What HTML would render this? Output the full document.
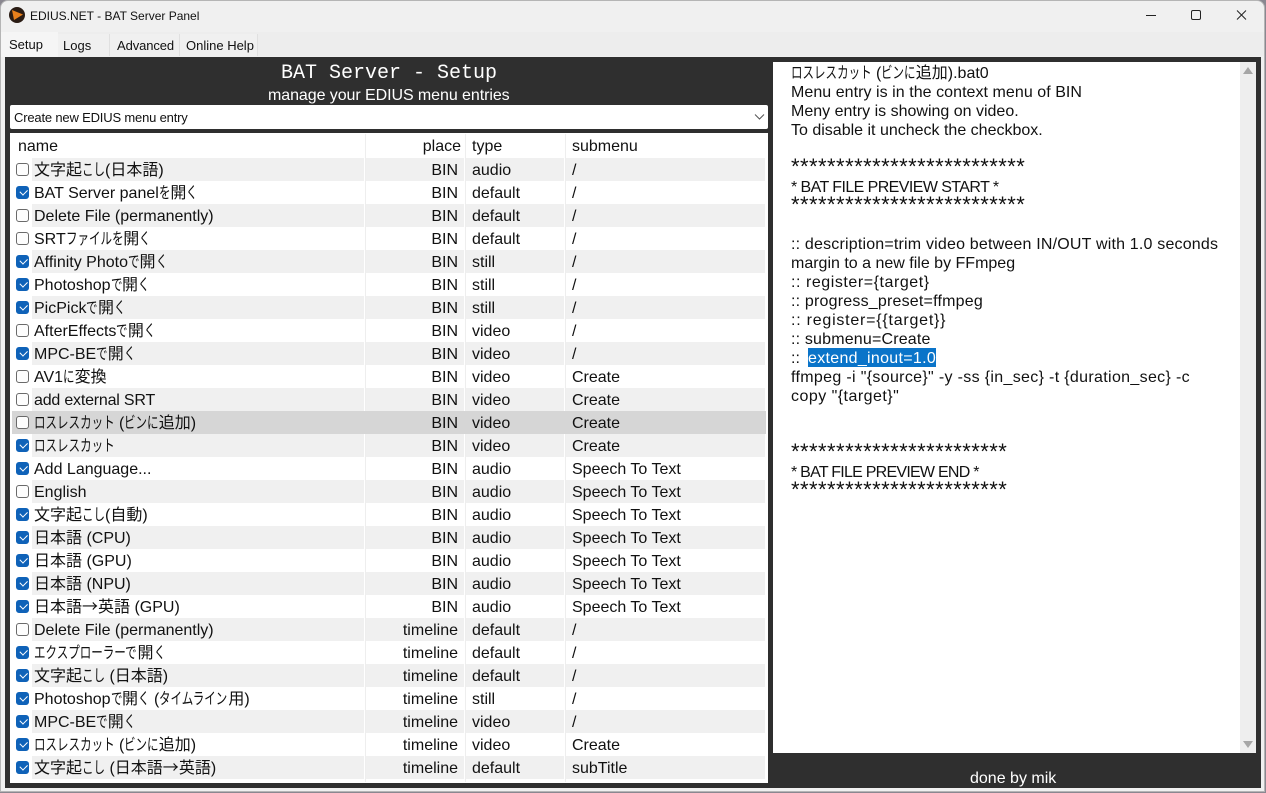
<!DOCTYPE html>
<html><head><meta charset="utf-8"><style>
*{box-sizing:border-box}
html,body{margin:0;padding:0;width:1266px;height:793px;overflow:hidden;background:#8a8790}
body{font-family:"Liberation Sans","Noto Sans CJK JP",sans-serif;font-size:16px;color:#111;position:relative}
div,span{position:absolute;white-space:pre}
#win{left:0;top:0;width:1265px;height:792px;background:#f0f0f0;border:1px solid #b5b5b5;border-radius:8px 8px 0 0;overflow:hidden}
.t{line-height:20px;height:20px}
.band{background:#f0f0f0;height:23px}
.cb{left:16px;width:13px;height:13px;border-radius:3px;border:1px solid #6a6a6a;background:#fdfdfd}
.cb.on{background:#0f62b8;border-color:#0f62b8}
.cb.on::after{content:"";position:absolute;left:3px;top:2px;width:6px;height:3.500px;border-left:1.200px solid #fff;border-bottom:1.200px solid #fff;transform:rotate(-45deg)}
.r{text-align:right}
.rt{left:791px;line-height:19px;height:19px;font-size:16px}
k{display:inline-block;width:calc(var(--n)*11.500px);transform:scaleX(.72);transform-origin:0 50%}
.n1{--n:1}.n2{--n:2}.n3{--n:3}.n5{--n:5}.n6{--n:6}.n7{--n:7}.n9{--n:9}
em{font-style:normal;font-family:"Noto Sans CJK JP",sans-serif;line-height:0}
.s{font-size:22px;letter-spacing:.45px}
</style></head><body>
<div id="win"></div>
<!-- title bar -->
<svg style="position:absolute;left:8px;top:6px" width="18" height="18" viewBox="0 0 18 18"><circle cx="9" cy="9" r="8" fill="#2a1c14"/><path d="M4 4 L15 8.5 L6 14 Z" fill="#e8801c"/></svg>
<div class="t" style="left:30px;top:6px;font-size:12px">EDIUS.NET - BAT Server Panel</div>
<svg style="position:absolute;left:1140px;top:5px" width="120" height="20" viewBox="0 0 120 20" fill="none" stroke="#222" stroke-width="1"><path d="M6 10.500H16"/><rect x="51.500" y="5.500" width="9" height="9" rx="1.500"/><path d="M97 5.500L106 14.500M106 5.500L97 14.500"/></svg>
<!-- tabs -->
<div style="left:1px;top:32px;width:1263px;height:24px;background:#ededed"></div>
<div style="left:1px;top:32px;width:57px;height:25px;background:#f5f5f5"></div>
<div style="left:58px;top:34px;width:52px;height:22px;background:#f0f0f0;border-right:1px solid #e0e0e0"></div>
<div style="left:110px;top:34px;width:70px;height:22px;background:#f0f0f0;border-right:1px solid #e0e0e0"></div>
<div style="left:180px;top:34px;width:78px;height:22px;background:#f0f0f0;border-right:1px solid #e0e0e0"></div>
<div class="t" style="left:9px;top:35px;font-size:13px">Setup</div>
<div class="t" style="left:63px;top:36px;font-size:13px">Logs</div>
<div class="t" style="left:117px;top:36px;font-size:13px;letter-spacing:-.1px">Advanced</div>
<div class="t" style="left:186px;top:36px;font-size:13px">Online Help</div>
<!-- dark panel -->
<div style="left:5px;top:57px;width:1256px;height:731px;background:#2f2f2f"></div>
<div class="t" style="left:281px;top:62px;margin-top:2px;font-family:'Liberation Mono',monospace;font-size:20px;color:#fff">BAT Server - Setup</div>
<div class="t" style="left:268px;top:86px;font-size:16px;color:#fff;letter-spacing:-.07px">manage your EDIUS menu entries</div>
<!-- combo -->
<div style="left:10px;top:105px;width:758px;height:24px;background:#fff;border-radius:2px"></div>
<div class="t" style="left:14px;top:108px;font-size:13px;letter-spacing:-.18px">Create new EDIUS menu entry</div>
<svg style="position:absolute;left:754px;top:113px" width="11" height="8" viewBox="0 0 11 8" fill="none" stroke="#555" stroke-width="1"><path d="M1 1.500L5.500 6L10 1.500"/></svg>
<!-- list -->
<div style="left:10px;top:133px;width:758px;height:650px;background:#fff"></div>
<div style="left:365px;top:134px;width:1px;height:648px;background:#eee"></div>
<div style="left:465px;top:134px;width:1px;height:648px;background:#eee"></div>
<div style="left:565px;top:134px;width:1px;height:648px;background:#eee"></div>
<div class="t" style="left:18px;top:137px">name</div>
<div class="t r" style="left:365px;width:96px;top:137px">place</div>
<div class="t" style="left:472px;top:137px">type</div>
<div class="t" style="left:572px;top:137px">submenu</div>
<div id="rows" style="left:0;top:0">
<div class="band" style="left:32px;top:158px;width:332px"></div><div class="band" style="left:366px;top:158px;width:98px"></div><div class="band" style="left:466px;top:158px;width:98px"></div><div class="band" style="left:566px;top:158px;width:199px"></div>
<div class="band" style="left:32px;top:204px;width:332px"></div><div class="band" style="left:366px;top:204px;width:98px"></div><div class="band" style="left:466px;top:204px;width:98px"></div><div class="band" style="left:566px;top:204px;width:199px"></div>
<div class="band" style="left:32px;top:250px;width:332px"></div><div class="band" style="left:366px;top:250px;width:98px"></div><div class="band" style="left:466px;top:250px;width:98px"></div><div class="band" style="left:566px;top:250px;width:199px"></div>
<div class="band" style="left:32px;top:296px;width:332px"></div><div class="band" style="left:366px;top:296px;width:98px"></div><div class="band" style="left:466px;top:296px;width:98px"></div><div class="band" style="left:566px;top:296px;width:199px"></div>
<div class="band" style="left:32px;top:342px;width:332px"></div><div class="band" style="left:366px;top:342px;width:98px"></div><div class="band" style="left:466px;top:342px;width:98px"></div><div class="band" style="left:566px;top:342px;width:199px"></div>
<div class="band" style="left:32px;top:388px;width:332px"></div><div class="band" style="left:366px;top:388px;width:98px"></div><div class="band" style="left:466px;top:388px;width:98px"></div><div class="band" style="left:566px;top:388px;width:199px"></div>
<div class="band" style="left:12px;top:411px;width:754px;background:#d6d6d6"></div>
<div class="band" style="left:32px;top:434px;width:332px"></div><div class="band" style="left:366px;top:434px;width:98px"></div><div class="band" style="left:466px;top:434px;width:98px"></div><div class="band" style="left:566px;top:434px;width:199px"></div>
<div class="band" style="left:32px;top:480px;width:332px"></div><div class="band" style="left:366px;top:480px;width:98px"></div><div class="band" style="left:466px;top:480px;width:98px"></div><div class="band" style="left:566px;top:480px;width:199px"></div>
<div class="band" style="left:32px;top:526px;width:332px"></div><div class="band" style="left:366px;top:526px;width:98px"></div><div class="band" style="left:466px;top:526px;width:98px"></div><div class="band" style="left:566px;top:526px;width:199px"></div>
<div class="band" style="left:32px;top:572px;width:332px"></div><div class="band" style="left:366px;top:572px;width:98px"></div><div class="band" style="left:466px;top:572px;width:98px"></div><div class="band" style="left:566px;top:572px;width:199px"></div>
<div class="band" style="left:32px;top:618px;width:332px"></div><div class="band" style="left:366px;top:618px;width:98px"></div><div class="band" style="left:466px;top:618px;width:98px"></div><div class="band" style="left:566px;top:618px;width:199px"></div>
<div class="band" style="left:32px;top:664px;width:332px"></div><div class="band" style="left:366px;top:664px;width:98px"></div><div class="band" style="left:466px;top:664px;width:98px"></div><div class="band" style="left:566px;top:664px;width:199px"></div>
<div class="band" style="left:32px;top:710px;width:332px"></div><div class="band" style="left:366px;top:710px;width:98px"></div><div class="band" style="left:466px;top:710px;width:98px"></div><div class="band" style="left:566px;top:710px;width:199px"></div>
<div class="band" style="left:32px;top:756px;width:332px"></div><div class="band" style="left:366px;top:756px;width:98px"></div><div class="band" style="left:466px;top:756px;width:98px"></div><div class="band" style="left:566px;top:756px;width:199px"></div>

<div class="cb" style="top:163px"></div><div class="t" style="left:34px;top:161px">文字起<k class="n2">こし</k>(日本語)</div><div class="t r" style="left:365px;width:93px;top:161px">BIN</div><div class="t" style="left:472px;top:161px">audio</div><div class="t" style="left:572px;top:161px">/</div>
<div class="cb on" style="top:186px"></div><div class="t" style="left:34px;top:184px">BAT Server panel<k class="n1">を</k>開<k class="n1">く</k></div><div class="t r" style="left:365px;width:93px;top:184px">BIN</div><div class="t" style="left:472px;top:184px">default</div><div class="t" style="left:572px;top:184px">/</div>
<div class="cb" style="top:209px"></div><div class="t" style="left:34px;top:207px">Delete File (permanently)</div><div class="t r" style="left:365px;width:93px;top:207px">BIN</div><div class="t" style="left:472px;top:207px">default</div><div class="t" style="left:572px;top:207px">/</div>
<div class="cb" style="top:232px"></div><div class="t" style="left:34px;top:230px">SRT<k class="n5">ファイルを</k>開<k class="n1">く</k></div><div class="t r" style="left:365px;width:93px;top:230px">BIN</div><div class="t" style="left:472px;top:230px">default</div><div class="t" style="left:572px;top:230px">/</div>
<div class="cb on" style="top:255px"></div><div class="t" style="left:34px;top:253px">Affinity Photo<k class="n1">で</k>開<k class="n1">く</k></div><div class="t r" style="left:365px;width:93px;top:253px">BIN</div><div class="t" style="left:472px;top:253px">still</div><div class="t" style="left:572px;top:253px">/</div>
<div class="cb on" style="top:278px"></div><div class="t" style="left:34px;top:276px">Photoshop<k class="n1">で</k>開<k class="n1">く</k></div><div class="t r" style="left:365px;width:93px;top:276px">BIN</div><div class="t" style="left:472px;top:276px">still</div><div class="t" style="left:572px;top:276px">/</div>
<div class="cb on" style="top:301px"></div><div class="t" style="left:34px;top:299px">PicPick<k class="n1">で</k>開<k class="n1">く</k></div><div class="t r" style="left:365px;width:93px;top:299px">BIN</div><div class="t" style="left:472px;top:299px">still</div><div class="t" style="left:572px;top:299px">/</div>
<div class="cb" style="top:324px"></div><div class="t" style="left:34px;top:322px">AfterEffects<k class="n1">で</k>開<k class="n1">く</k></div><div class="t r" style="left:365px;width:93px;top:322px">BIN</div><div class="t" style="left:472px;top:322px">video</div><div class="t" style="left:572px;top:322px">/</div>
<div class="cb on" style="top:347px"></div><div class="t" style="left:34px;top:345px">MPC-BE<k class="n1">で</k>開<k class="n1">く</k></div><div class="t r" style="left:365px;width:93px;top:345px">BIN</div><div class="t" style="left:472px;top:345px">video</div><div class="t" style="left:572px;top:345px">/</div>
<div class="cb" style="top:370px"></div><div class="t" style="left:34px;top:368px">AV1<k class="n1">に</k>変換</div><div class="t r" style="left:365px;width:93px;top:368px">BIN</div><div class="t" style="left:472px;top:368px">video</div><div class="t" style="left:572px;top:368px">Create</div>
<div class="cb" style="top:393px"></div><div class="t" style="left:34px;top:391px;letter-spacing:-.2px">add external SRT</div><div class="t r" style="left:365px;width:93px;top:391px">BIN</div><div class="t" style="left:472px;top:391px">video</div><div class="t" style="left:572px;top:391px">Create</div>
<div class="cb" style="top:416px"></div><div class="t" style="left:34px;top:414px"><k class="n7">ロスレスカット</k> (<k class="n3">ビンに</k>追加)</div><div class="t r" style="left:365px;width:93px;top:414px">BIN</div><div class="t" style="left:472px;top:414px">video</div><div class="t" style="left:572px;top:414px">Create</div>
<div class="cb on" style="top:439px"></div><div class="t" style="left:34px;top:437px"><k class="n7">ロスレスカット</k></div><div class="t r" style="left:365px;width:93px;top:437px">BIN</div><div class="t" style="left:472px;top:437px">video</div><div class="t" style="left:572px;top:437px">Create</div>
<div class="cb on" style="top:462px"></div><div class="t" style="left:34px;top:460px">Add Language...</div><div class="t r" style="left:365px;width:93px;top:460px">BIN</div><div class="t" style="left:472px;top:460px">audio</div><div class="t" style="left:572px;top:460px">Speech To Text</div>
<div class="cb" style="top:485px"></div><div class="t" style="left:34px;top:483px">English</div><div class="t r" style="left:365px;width:93px;top:483px">BIN</div><div class="t" style="left:472px;top:483px">audio</div><div class="t" style="left:572px;top:483px">Speech To Text</div>
<div class="cb on" style="top:508px"></div><div class="t" style="left:34px;top:506px">文字起<k class="n2">こし</k>(自動)</div><div class="t r" style="left:365px;width:93px;top:506px">BIN</div><div class="t" style="left:472px;top:506px">audio</div><div class="t" style="left:572px;top:506px">Speech To Text</div>
<div class="cb on" style="top:531px"></div><div class="t" style="left:34px;top:529px">日本語 (CPU)</div><div class="t r" style="left:365px;width:93px;top:529px">BIN</div><div class="t" style="left:472px;top:529px">audio</div><div class="t" style="left:572px;top:529px">Speech To Text</div>
<div class="cb on" style="top:554px"></div><div class="t" style="left:34px;top:552px">日本語 (GPU)</div><div class="t r" style="left:365px;width:93px;top:552px">BIN</div><div class="t" style="left:472px;top:552px">audio</div><div class="t" style="left:572px;top:552px">Speech To Text</div>
<div class="cb on" style="top:577px"></div><div class="t" style="left:34px;top:575px">日本語 (NPU)</div><div class="t r" style="left:365px;width:93px;top:575px">BIN</div><div class="t" style="left:472px;top:575px">audio</div><div class="t" style="left:572px;top:575px">Speech To Text</div>
<div class="cb on" style="top:600px"></div><div class="t" style="left:34px;top:598px">日本語<em>→</em>英語 (GPU)</div><div class="t r" style="left:365px;width:93px;top:598px">BIN</div><div class="t" style="left:472px;top:598px">audio</div><div class="t" style="left:572px;top:598px">Speech To Text</div>
<div class="cb" style="top:623px"></div><div class="t" style="left:34px;top:621px">Delete File (permanently)</div><div class="t r" style="left:365px;width:93px;top:621px">timeline</div><div class="t" style="left:472px;top:621px">default</div><div class="t" style="left:572px;top:621px">/</div>
<div class="cb on" style="top:646px"></div><div class="t" style="left:34px;top:644px"><k class="n9">エクスプローラーで</k>開<k class="n1">く</k></div><div class="t r" style="left:365px;width:93px;top:644px">timeline</div><div class="t" style="left:472px;top:644px">default</div><div class="t" style="left:572px;top:644px">/</div>
<div class="cb on" style="top:669px"></div><div class="t" style="left:34px;top:667px">文字起<k class="n2">こし</k> (日本語)</div><div class="t r" style="left:365px;width:93px;top:667px">timeline</div><div class="t" style="left:472px;top:667px">default</div><div class="t" style="left:572px;top:667px">/</div>
<div class="cb on" style="top:692px"></div><div class="t" style="left:34px;top:690px">Photoshop<k class="n1">で</k>開<k class="n1">く</k> (<k class="n6">タイムライン</k>用)</div><div class="t r" style="left:365px;width:93px;top:690px">timeline</div><div class="t" style="left:472px;top:690px">still</div><div class="t" style="left:572px;top:690px">/</div>
<div class="cb on" style="top:715px"></div><div class="t" style="left:34px;top:713px">MPC-BE<k class="n1">で</k>開<k class="n1">く</k></div><div class="t r" style="left:365px;width:93px;top:713px">timeline</div><div class="t" style="left:472px;top:713px">video</div><div class="t" style="left:572px;top:713px">/</div>
<div class="cb on" style="top:738px"></div><div class="t" style="left:34px;top:736px"><k class="n7">ロスレスカット</k> (<k class="n3">ビンに</k>追加)</div><div class="t r" style="left:365px;width:93px;top:736px">timeline</div><div class="t" style="left:472px;top:736px">video</div><div class="t" style="left:572px;top:736px">Create</div>
<div class="cb on" style="top:761px"></div><div class="t" style="left:34px;top:759px">文字起<k class="n2">こし</k> (日本語<em>→</em>英語)</div><div class="t r" style="left:365px;width:93px;top:759px">timeline</div><div class="t" style="left:472px;top:759px">default</div><div class="t" style="left:572px;top:759px">subTitle</div>
</div>
<!-- right panel -->
<div style="left:773px;top:62px;width:483px;height:691px;background:#fff"></div>
<div style="left:1240px;top:62px;width:16px;height:691px;background:#eee"></div>
<svg style="position:absolute;left:1243px;top:67px" width="10" height="8"><path d="M5 0L10 7H0Z" fill="#a6a6a6"/></svg>
<svg style="position:absolute;left:1243px;top:741px" width="10" height="8"><path d="M0 0H10L5 7Z" fill="#a6a6a6"/></svg>
<div class="rt" style="top:64px"><k class="n7">ロスレスカット</k> (<k class="n3">ビンに</k>追加).bat0</div>
<div class="rt" style="top:83px;letter-spacing:.05px">Menu entry is in the context menu of BIN</div>
<div class="rt" style="top:102px">Meny entry is showing on video.</div>
<div class="rt" style="top:121px">To disable it uncheck the checkbox.</div>
<div class="rt s" style="top:157px">**************************</div>
<div class="rt" style="top:178px;letter-spacing:-.58px">* BAT FILE PREVIEW START *</div>
<div class="rt s" style="top:195px">**************************</div>
<div class="rt" style="top:235px;letter-spacing:.19px">:: description=trim video between IN/OUT with 1.0 seconds</div>
<div class="rt" style="top:254px">margin to a new file by FFmpeg</div>
<div class="rt" style="top:273px;letter-spacing:.55px">:: register={target}</div>
<div class="rt" style="top:292px;letter-spacing:.2px">:: progress_preset=ffmpeg</div>
<div class="rt" style="top:311px;letter-spacing:.77px">:: register={{target}}</div>
<div class="rt" style="top:330px;letter-spacing:.18px">:: submenu=Create</div>
<div class="rt" style="top:349px">::</div>
<div style="left:808px;top:348px;width:128px;height:19px;background:#0a74c9"></div>
<div class="rt" style="left:808px;top:349px;color:#fff;letter-spacing:.3px">extend_inout=1.0</div>
<div class="rt" style="top:368px;letter-spacing:.33px">ffmpeg -i "{source}" -y -ss {in_sec} -t {duration_sec} -c</div>
<div class="rt" style="top:387px;letter-spacing:.47px">copy "{target}"</div>
<div class="rt s" style="top:442px">************************</div>
<div class="rt" style="top:463px;letter-spacing:-.75px">* BAT FILE PREVIEW END *</div>
<div class="rt s" style="top:480px">************************</div>
<div class="t" style="left:970px;top:769px;color:#fff">done by mik</div>
</body></html>
